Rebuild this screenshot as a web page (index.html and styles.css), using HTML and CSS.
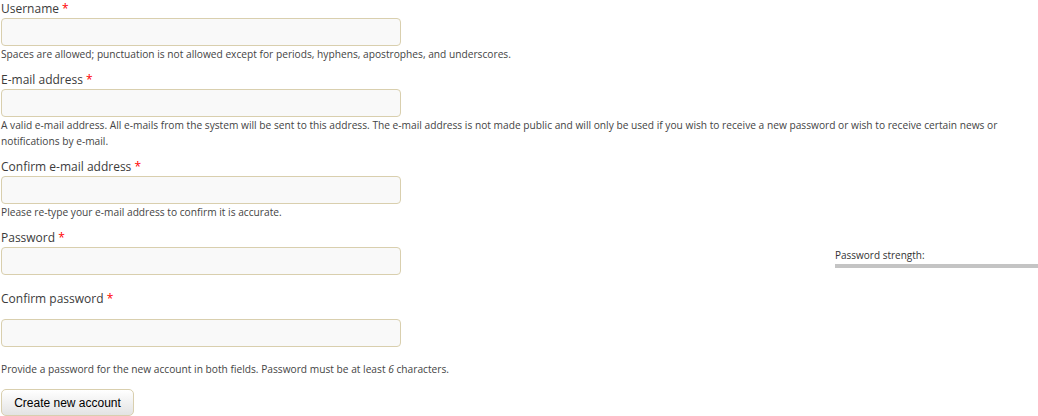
FILE: index.html
```html
<!DOCTYPE html>
<html>
<head>
<meta charset="utf-8">
<link rel="stylesheet" href="styles.css">
</head>
<body>
<form class="register">
  <div class="form-item">
    <label class="label">Username <span class="req">*</span></label>
    <input class="text" type="text">
    <div class="desc">Spaces are allowed; punctuation is not allowed except for periods, hyphens, apostrophes, and underscores.</div>
  </div>
  <div class="form-item">
    <label class="label">E-mail address <span class="req">*</span></label>
    <input class="text" type="text">
    <div class="desc">A valid e-mail address. All e-mails from the system will be sent to this address. The e-mail address is not made public and will only be used if you wish to receive a new password or wish to receive certain news or notifications by e-mail.</div>
  </div>
  <div class="form-item">
    <label class="label">Confirm e-mail address <span class="req">*</span></label>
    <input class="text" type="text">
    <div class="desc">Please re-type your e-mail address to confirm it is accurate.</div>
  </div>
  <div class="form-item pass-row">
    <div class="pass-field">
      <label class="label">Password <span class="req">*</span></label>
      <input class="text" type="password">
    </div>
    <div class="strength">
      <div class="strength-title">Password strength:</div>
      <div class="strength-bar"></div>
    </div>
  </div>
  <div class="form-item confirm">
    <label class="label">Confirm password <span class="req">*</span></label>
    <input class="text" type="password">
  </div>
  <div class="desc pass-desc">Provide a password for the new account in both fields. Password must be at least <em>6</em> characters.</div>
  <button class="submit" type="button">Create new account</button>
</form>
</body>
</html>
```
FILE: styles.css
```css
html, body {
  margin: 0;
  padding: 0;
  background: #fff;
}
body {
  font-family: "Open Sans", "DejaVu Sans", sans-serif;
  color: #333;
  width: 1038px;
  overflow: hidden;
}
.register {
  padding-left: 1px;
  padding-top: 0;
}
.form-item {
  margin-bottom: 9px;
}
.label {
  display: block;
  font-size: 12px;
  line-height: 18px;
  color: #3b3b3b;
}
.req {
  color: #f00;
}
.text {
  display: block;
  box-sizing: border-box;
  width: 400px;
  height: 28px;
  margin: 0;
  padding: 2px 6px;
  border: 1px solid #d9cfae;
  border-radius: 4px;
  background: #f9f9f9;
  font-family: inherit;
  font-size: 12px;
}
.desc {
  font-size: 10.2px;
  line-height: 16px;
  color: #444;
}
.pass-row {
  display: flex;
  justify-content: space-between;
  margin-bottom: 15px;
}
.strength {
  width: 203px;
  padding-top: 18px;
}
.strength-title {
  font-size: 10px;
  line-height: 16px;
  color: #333;
}
.strength-bar {
  height: 4px;
  margin-top: 1px;
  background: #c4c4c4;
}
.confirm .label {
  margin-bottom: 11px;
}
.confirm {
  margin-bottom: 14px;
}
.pass-desc {
  margin-bottom: 12px;
}
.submit {
  display: block;
  box-sizing: border-box;
  width: 133px;
  height: 27px;
  margin: 0;
  padding: 0 12px;
  border: 1px solid #d9cfae;
  border-radius: 5px;
  background: linear-gradient(#ffffff, #e3e3e3);
  font-family: "Liberation Sans", Arial, sans-serif;
  font-size: 12px;
  color: #000;
}
```
